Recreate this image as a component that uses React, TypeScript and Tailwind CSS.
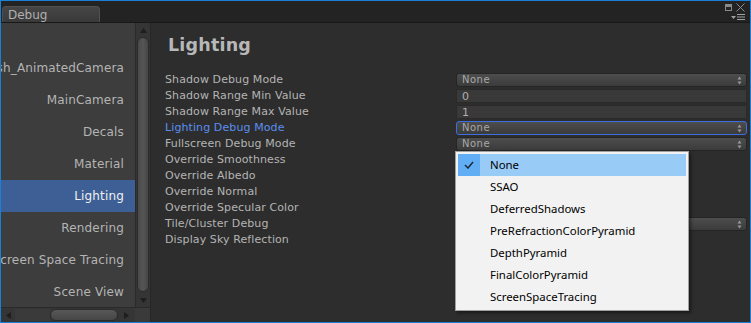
import React from "react";

const sceneItems = [
  "Flash_AnimatedCamera",
  "MainCamera",
  "Decals",
  "Material",
  "Lighting",
  "Rendering",
  "Screen Space Tracing",
  "Scene View",
];

type Field = { label: string; kind: "enum" | "num"; value: string; focused?: boolean };

const fields: Field[] = [
  { label: "Shadow Debug Mode", kind: "enum", value: "None" },
  { label: "Shadow Range Min Value", kind: "num", value: "0" },
  { label: "Shadow Range Max Value", kind: "num", value: "1" },
  { label: "Lighting Debug Mode", kind: "enum", value: "None", focused: true },
  { label: "Fullscreen Debug Mode", kind: "enum", value: "None" },
];

const moreLabels = [
  "Override Smoothness",
  "Override Albedo",
  "Override Normal",
  "Override Specular Color",
  "Tile/Cluster Debug",
  "Display Sky Reflection",
];

const menuItems = [
  "None",
  "SSAO",
  "DeferredShadows",
  "PreRefractionColorPyramid",
  "DepthPyramid",
  "FinalColorPyramid",
  "ScreenSpaceTracing",
];

const uiFont = { fontFamily: '"DejaVu Sans", sans-serif' };

function Arrows() {
  return (
    <svg width="5" height="9" viewBox="0 0 5 9" className="shrink-0">
      <path d="M2.5 0.5 L4.5 3.5 H0.5 Z" fill="#9a9a9a" />
      <path d="M2.5 8.5 L4.5 5.5 H0.5 Z" fill="#9a9a9a" />
    </svg>
  );
}

function EnumField({ value, focused }: { value: string; focused?: boolean }) {
  return (
    <div
      className={
        "h-[14px] rounded-[3px] flex items-center justify-between pl-[5px] pr-[4px] bg-gradient-to-b from-[#4d4d4d] to-[#3b3b3b] border " +
        (focused ? "border-[#3d6ee0]" : "border-[#252525]")
      }
    >
      <span className="text-[10px] leading-none text-[#a9a9a9] tracking-[0.5px]">{value}</span>
      <Arrows />
    </div>
  );
}

function NumField({ value }: { value: string }) {
  return (
    <div className="h-[14px] bg-[#393939] border border-[#2a2a2a] flex items-center pl-[5px]">
      <span className="text-[11px] leading-none text-[#b0b0b0]">{value}</span>
    </div>
  );
}

function TriUp() {
  return (
    <svg width="7" height="5" viewBox="0 0 7 5">
      <path d="M3.5 0 L7 5 H0 Z" fill="#1e1e1e" />
    </svg>
  );
}

function TriDown() {
  return (
    <svg width="7" height="5" viewBox="0 0 7 5">
      <path d="M0 0 H7 L3.5 5 Z" fill="#1e1e1e" />
    </svg>
  );
}

export default function App() {
  return (
    <div className="w-[751px] h-[323px] border border-[#1a7fd6] bg-[#2d2d2d] flex flex-col overflow-hidden" style={uiFont}>
      {/* tab bar */}
      <div className="h-[22px] bg-[#232323] border-b border-[#181818] flex items-end justify-between relative">
        <div className="ml-[1px] w-[98px] h-[16px] rounded-t-[4px] bg-gradient-to-b from-[#454545] to-[#3a3a3a] border border-b-0 border-[#505050] flex items-center pl-[5px]">
          <span className="text-[12px] text-[#b0b0b0] leading-none">Debug</span>
        </div>
        <div className="absolute right-[5px] top-[2px] flex flex-col items-end gap-[2px]">
          <div className="flex items-center gap-[4px]">
            <div className="w-[7px] h-[7px] border border-[#8a8a8a] border-t-[3px]" />
            <svg width="9" height="9" viewBox="0 0 9 9">
              <path d="M0.5 0.5 L8.5 8.5 M8.5 0.5 L0.5 8.5" stroke="#8c8c8c" strokeWidth="1" />
            </svg>
          </div>
          <div className="flex items-center gap-[1px]">
            <svg width="5" height="3" viewBox="0 0 5 3">
              <path d="M0 0 H5 L2.5 3 Z" fill="#a0a0a0" />
            </svg>
            <svg width="8" height="6" viewBox="0 0 8 6">
              <path d="M0 0.5 H8 M0 3 H8 M0 5.5 H8" stroke="#a0a0a0" strokeWidth="1" />
            </svg>
          </div>
        </div>
      </div>

      <div className="flex flex-1 min-h-0">
        {/* left list */}
        <div className="w-[149px] flex flex-col shrink-0">
          <div className="flex flex-1 min-h-0">
            <div className="w-[134px] bg-[#3d3d3d] overflow-hidden pt-[29px]">
              {sceneItems.map((s) => {
                const sel = s === "Lighting";
                return (
                  <div
                    key={s}
                    className={
                      "h-[32px] flex items-center justify-end pr-[11px] whitespace-nowrap text-[12px] tracking-[0.15px] " +
                      (sel ? "bg-[#3e5f96] text-[#f0f0f0]" : "text-[#b4b4b4]")
                    }
                  >
                    {s}
                  </div>
                );
              })}
            </div>
            {/* vertical scrollbar */}
            <div className="w-[15px] bg-[#353535] border-l border-[#2a2a2a] flex flex-col items-center">
              <div className="h-[14px] flex items-center justify-center">
                <TriUp />
              </div>
              <div className="w-[12px] flex-1 mb-[1px] rounded-full bg-gradient-to-r from-[#4a4a4a] via-[#555555] to-[#464646] border border-[#2b2b2b]" />
              <div className="h-[14px] flex items-center justify-center">
                <TriDown />
              </div>
            </div>
          </div>
          {/* horizontal scrollbar */}
          <div className="h-[15px] flex bg-[#353535] border-t border-[#2a2a2a]">
            <div className="w-[134px] flex items-center">
              <div className="w-[14px] flex justify-center">
                <svg width="5" height="7" viewBox="0 0 5 7">
                  <path d="M5 0 V7 L0 3.5 Z" fill="#1e1e1e" />
                </svg>
              </div>
              <div className="w-[35px] h-[12px] bg-[#3a3a3a]" />
              <div className="w-[68px] h-[12px] rounded-full bg-gradient-to-b from-[#585858] to-[#464646] border border-[#2b2b2b]" />
              <div className="flex-1 flex justify-center">
                <svg width="5" height="7" viewBox="0 0 5 7">
                  <path d="M0 0 V7 L5 3.5 Z" fill="#1e1e1e" />
                </svg>
              </div>
            </div>
            <div className="flex-1 bg-[#3a3a3a]" />
          </div>
        </div>

        {/* right panel */}
        <div className="flex-1 bg-[#2d2d2d] border-l border-[#262626] pl-[14px] pr-[3px] relative">
          <div className="h-[45px] flex items-center pl-[3px]">
            <span className="text-[17.5px] font-bold text-[#b8b8b8] tracking-[0.2px]">Lighting</span>
          </div>
          <div className="flex flex-col gap-[2px] mt-[5px]">
            {fields.map((f) => (
              <div key={f.label} className="flex items-center h-[14px]">
                <div
                  className={
                    "w-[291px] text-[11px] whitespace-nowrap tracking-[0.1px] " +
                    (f.focused ? "text-[#5b8df0]" : "text-[#b4b4b4]")
                  }
                >
                  {f.label}
                </div>
                <div className="flex-1">
                  {f.kind === "enum" ? <EnumField value={f.value} focused={f.focused} /> : <NumField value={f.value} />}
                </div>
              </div>
            ))}
            {moreLabels.map((l) => (
              <div key={l} className="flex items-center h-[14px]">
                <div className="w-[291px] text-[11px] whitespace-nowrap tracking-[0.1px] text-[#b4b4b4]">{l}</div>
                <div className="flex-1">{l === "Tile/Cluster Debug" ? <EnumField value="" /> : null}</div>
              </div>
            ))}
          </div>

          {/* popup menu */}
          <div
            className="absolute left-[304px] top-[128px] w-[234px] bg-[#f2f2f2] border border-[#a0a0a0] shadow-[2px_2px_3px_rgba(0,0,0,0.45)] p-[2px]"
            style={{ fontFamily: '"Noto Sans", "Open Sans", sans-serif' }}
          >
            {menuItems.map((m, i) => {
              const sel = i === 0;
              return (
                <div key={m} className={"h-[22px] flex items-center " + (sel ? "bg-[#99cbf7]" : "")}>
                  <div className={"w-[22px] h-full flex items-center justify-center " + (sel ? "bg-[#62aef5]" : "")}>
                    {sel ? (
                      <svg width="10" height="8" viewBox="0 0 10 8">
                        <path d="M1 4 L4 7 L9 1" stroke="#1b2b3b" strokeWidth="1.5" fill="none" />
                      </svg>
                    ) : null}
                  </div>
                  <span className="pl-[10px] text-[11.4px] text-black leading-none">{m}</span>
                </div>
              );
            })}
          </div>
        </div>
      </div>
    </div>
  );
}
